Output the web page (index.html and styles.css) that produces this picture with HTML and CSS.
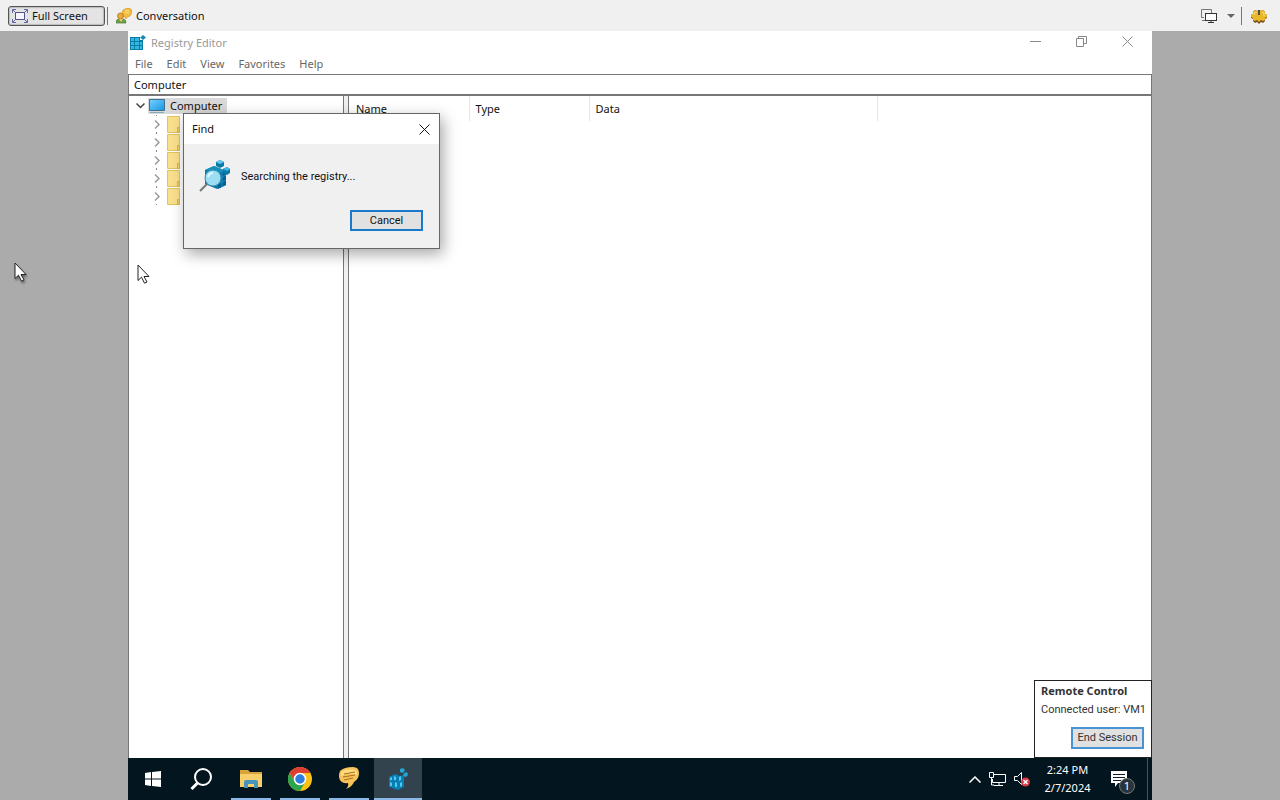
FILE: index.html
```html
<!DOCTYPE html>
<html lang="en">
<head>
    <meta charset="UTF-8">
    <meta name="viewport" content="width=device-width, initial-scale=1.0">
    <title>Remote Session</title>
    <link rel="stylesheet" href="styles.css">
</head>
<body>
    <header class="toolbar">
        <button class="tool tool-active" type="button">
            <svg width="16" height="14" viewBox="0 0 16 14" fill="none" stroke="#6467a8">
                <rect x="3.5" y="3.5" width="9" height="7" fill="#f4f6ff" stroke="#50538f"/>
                <path d="M.5 4V.5H4M12 .5h3.500V4M15.500 10v3.500H12M4 13.500H.5V10M.5.5l3 3M15.500.5l-3 3M.5 13.500l3-3M15.500 13.500l-3-3"/>
            </svg>
            Full Screen
        </button>
        <span class="divider"></span>
        <button class="tool" type="button">
            <svg width="16" height="16" viewBox="0 0 16 16">
                <path d="M7 2q4-3 8-1 2 4-1 7l-3 1-1 2-1-2Q6 9 6 5z" fill="#f3bd40" stroke="#d79a25" stroke-width=".7"/>
                <path d="M9 3q3-1 4 0M9 5q3-1 4 0" stroke="#ffe18b" fill="none"/>
                <path d="M0 15q0-4 3-4h4q3 0 3 4z" fill="#6fa04a" stroke="#4f7b37" stroke-width=".7"/>
                <circle cx="4.500" cy="8" r="3" fill="#e7aa3d" stroke="#a86b16" stroke-width=".7"/>
                <path d="m3 11 2 3 2-3z" fill="#f5c659"/>
            </svg>
            Conversation
        </button>
        <div class="toolbar-right">
            <button class="icon-button monitors" type="button" aria-label="Select monitor">
                <svg width="18" height="16" viewBox="0 0 18 16" fill="none">
                    <path d="M4 9.500H1.500v-8h10V5M2 12.500h3" stroke="#777"/>
                    <rect x="5.500" y="5.500" width="11" height="7" fill="#fff" stroke="#333"/>
                    <path d="M11 13v2M8 14.500h6" stroke="#333"/>
                </svg>
                <svg width="8" height="4" viewBox="0 0 8 4"><path d="M0 0h8L4 4z" fill="#666"/></svg>
            </button>
            <span class="divider"></span>
            <button class="icon-button" type="button" aria-label="Settings">
                <svg width="18" height="16" viewBox="0 0 18 16">
                    <path d="m3 4 2-2 2 1 1-1h2l1 1 2-1 2 2v2l2 1v3l-2 1v2l-2 2-2-1-2 2-2-2-2 1-2-2v-2l-2-1V7l2-1z" fill="#76501c"/>
                    <path d="m3 4 2-2 2 1 1-1h2l1 1 2-1 2 2v2l2 1v2l-2 1v2l-2 1-2-1-2 2-2-2-2 1-2-1v-2l-2-1V7l2-1z" fill="#eab72b"/>
                    <path d="M4 7q0-3 3-3M12 4q3 1 2 4" stroke="#ffe26c" fill="none"/>
                    <path d="M8 2h2v5H8z" fill="#4e5148"/>
                </svg>
            </button>
        </div>
    </header>

    <main class="viewer">
        <div class="desktop">
            <section class="window">
                <div class="titlebar">
                    <svg width="16" height="16" viewBox="0 0 16 16">
                        <path d="M0 2h10v3h3v10H0z" fill="#087ba7"/>
                        <path d="M1 3h3v3H1zM5 3h4v3H5zM1 7h3v3H1zM5 7h4v3H5zM10 7h2v3h-2zM1 11h3v3H1zM5 11h4v3H5zM10 11h2v3h-2z" fill="#35b6df"/>
                        <path d="m13 0 3 2.500L13 5l-3-2.500z" fill="#188bb4"/>
                    </svg>
                    <h1>Registry Editor</h1>
                    <div class="window-buttons">
                        <button type="button" aria-label="Minimize"><svg width="11" height="11" viewBox="0 0 11 11"><path d="M0 5.500h11"/></svg></button>
                        <button type="button" aria-label="Restore"><svg width="11" height="11" viewBox="0 0 11 11"><path d="M.5 2.500h7v8h-7zM2.500 2V.5h8v7H8"/></svg></button>
                        <button type="button" aria-label="Close"><svg width="11" height="11" viewBox="0 0 11 11"><path d="m.5.5 10 10M10.500.5l-10 10"/></svg></button>
                    </div>
                </div>
                <nav class="menubar">
                    <button type="button">File</button>
                    <button type="button">Edit</button>
                    <button type="button">View</button>
                    <button type="button">Favorites</button>
                    <button type="button">Help</button>
                </nav>
                <input class="address" type="text" value="Computer" aria-label="Address">
                <div class="panes">
                    <div class="tree">
                        <div class="tree-root">
                            <svg width="9" height="6" viewBox="0 0 9 6"><path d="m.5.500 4 4 4-4" fill="none" stroke="#444" stroke-width="1.500"/></svg>
                            <span class="tree-label">
                                <svg width="18" height="16" viewBox="0 0 18 16">
                                    <defs><linearGradient id="screen" x2="1" y2="1"><stop stop-color="#76d2ff"/><stop offset="1" stop-color="#1695df"/></linearGradient></defs>
                                    <path d="M1.500 1.500h15v11h-15z" fill="url(#screen)" stroke="#3d718f"/>
                                    <path d="M2 14.500h14" stroke="#8ba9bb"/>
                                </svg>
                                Computer
                            </span>
                        </div>
                        <ul class="tree-keys">
                            <li></li>
                            <li></li>
                            <li></li>
                            <li></li>
                            <li></li>
                        </ul>
                    </div>
                    <div class="splitter"></div>
                    <div class="values">
                        <table>
                            <thead>
                                <tr><th class="col-name">Name</th><th class="col-type">Type</th><th class="col-data">Data</th><th></th></tr>
                            </thead>
                        </table>
                    </div>
                </div>
            </section>

            <section class="dialog" role="dialog" aria-labelledby="find-title">
                <div class="dialog-title">
                    <h2 id="find-title">Find</h2>
                    <button type="button" aria-label="Close"><svg width="11" height="11" viewBox="0 0 11 11"><path d="m.5.5 10 10M10.500.5l-10 10" stroke="#111"/></svg></button>
                </div>
                <div class="dialog-body">
                    <svg width="32" height="32" viewBox="0 0 32 32">
                        <path d="m6 10 9-4 12 5v14l-9 4-12-5z" fill="#087ba9"/>
                        <path d="m6 10 9-4 12 5-9 3z" fill="#168fba"/>
                        <path d="m19 15 8-4v14l-8 4z" fill="#056096"/>
                        <path d="M23 13v14M19 19l8-4M19 24l8-4" stroke="#1f8fc4"/>
                        <path d="m21 0 4 2v4l-4 2-4-2V2z" fill="#087ba9"/><path d="m21 0 4 2-4 2-4-2z" fill="#62cbed"/>
                        <path d="m28 7 3 2v4l-3 2-4-2V9z" fill="#087ba9"/><path d="m28 7 3 2-3 2-4-2z" fill="#43b9e2"/>
                        <path d="M9 23 1 31" stroke="#71777a" stroke-width="2"/>
                        <circle cx="14" cy="18" r="8" fill="#9bddf3" stroke="#368daf"/>
                        <path d="M9 17q1-4 5-4" stroke="#ddf8ff" stroke-width="2" fill="none"/>
                    </svg>
                    <p>Searching the registry...</p>
                </div>
                <div class="dialog-actions"><button class="button" type="button">Cancel</button></div>
            </section>

            <aside class="session">
                <h2>Remote Control</h2>
                <p>Connected user: VM1</p>
                <button class="button" type="button">End Session</button>
            </aside>

            <footer class="taskbar">
                <div class="apps">
                    <button type="button" aria-label="Start">
                        <svg width="16" height="16" viewBox="0 0 16 16" fill="#fff"><path d="m0 2 6-1v6.500H0zM7 1l9-1v7.500H7zM0 8.500h6V15l-6-1zM7 8.500h9V16l-9-1z"/></svg>
                    </button>
                    <button type="button" aria-label="Search">
                        <svg width="24" height="24" viewBox="0 0 24 24" fill="none" stroke="#fff" stroke-width="2"><circle cx="13" cy="10" r="8"/><path d="m7.500 16-6 6" stroke-width="3"/></svg>
                    </button>
                    <button class="running" type="button" aria-label="File Explorer">
                        <svg width="22" height="20" viewBox="0 0 22 20"><path d="M0 1h8l2 2h12v4H0z" fill="#d9a43c"/><path d="M0 5h22v13H0z" fill="#f8cf68"/><path d="M4 19v-6q0-2 2-2h10q2 0 2 2v6h-4v-4H8v4z" fill="#4794bd"/></svg>
                    </button>
                    <button class="running" type="button" aria-label="Chrome">
                        <svg width="24" height="24" viewBox="0 0 24 24">
                            <circle cx="12" cy="12" r="12" fill="#fbc116"/>
                            <path d="M1.600 6A12 12 0 0 1 22.400 6H12a6 6 0 0 0-5.200 9z" fill="#df3f32"/>
                            <path d="M1.600 6A12 12 0 0 0 12 24l5.200-9A6 6 0 0 1 6.800 15z" fill="#2da44e"/>
                            <circle cx="12" cy="12" r="5.500" fill="#2f7de1" stroke="#fff" stroke-width="1.500"/>
                        </svg>
                    </button>
                    <button class="running" type="button" aria-label="Chat">
                        <svg width="22" height="24" viewBox="0 0 22 24"><path d="M2 4Q6 0 15 0q6 0 6 6 0 6-5 9-2 5-8 7 3-3 2-6-8 1-9-6Q1 6 2 4z" fill="#f5c35a"/><path d="M3 5q5-4 14-2 3 2 2 5Q12 5 3 9z" fill="#ffdc82"/><path d="m6 7 11-2M5 10l12-2M6 13l9-2" stroke="#a96d18"/></svg>
                    </button>
                    <button class="running current" type="button" aria-label="Registry Editor">
                        <svg width="22" height="24" viewBox="0 0 22 24">
                            <path d="m2 10 6-3 5 2 4-1v12l-6 3-9-3z" fill="#087eb2"/>
                            <path d="m13 2 3-1 2 2-2 3-3-1zM17 6l3-1 1 3-2 2-3-1z" fill="#24a6d6"/>
                            <path d="m3 11 2-1v3H3zM7 9l2 1v3H7zM3 15l2 1v3H3zM8 15l2 1v4H8zM12 10l2-1v4l-2 1zM13 16l2-1v4l-2 1z" fill="#55c8ef"/>
                        </svg>
                    </button>
                </div>
                <div class="tray">
                    <svg width="12" height="7" viewBox="0 0 12 7" fill="none" stroke="#fff" stroke-width="1.500"><path d="m.5 6.500 5.500-5.500 5.500 5.500"/></svg>
                    <svg width="17" height="14" viewBox="0 0 17 14" fill="none" stroke="#fff"><path d="M5 2.500h11.500v8H3.500V7M10 11v2M5 13.500h9M.5.5h4v5h-4zM2.500 6v7H5"/></svg>
                    <svg width="16" height="16" viewBox="0 0 16 16"><path d="M.5 5.500h3l4-4v12l-4-4h-3z" fill="none" stroke="#fff"/><circle cx="11.500" cy="11" r="4.500" fill="#d73945"/><path d="m9.500 9 4 4M13.500 9l-4 4" stroke="#fff" stroke-width="1.500"/></svg>
                    <time class="clock" datetime="2024-02-07T14:24">2:24 PM<br>2/7/2024</time>
                    <button class="notifications" type="button" aria-label="1 notification">
                        <svg width="16" height="16" viewBox="0 0 16 16"><path d="M0 0h16v12H7l-3 4v-4H0z" fill="#fff"/><path d="M2 3.500h12M2 6.500h12M2 9.500h8" stroke="#111d24"/></svg>
                        <span class="badge">1</span>
                    </button>
                </div>
            </footer>

            <svg class="pointer pointer-remote" width="13" height="20" viewBox="0 0 13 20"><path d="M1 1v15.500l3.500-3.300 3 6 2.500-1.200-3-5.500h5z" fill="#fff" stroke="#222"/></svg>
        </div>
        <svg class="pointer pointer-local" width="13" height="20" viewBox="0 0 13 20"><path d="M1 1v15.500l3.500-3.300 3 6 2.500-1.200-3-5.500h5z" fill="#fff" stroke="#222"/></svg>
    </main>

    <script>
        // every registry key starts collapsed
        document.querySelectorAll('.tree-keys li').forEach(function (item) {
            item.innerHTML =
                '<svg width="6" height="18" viewBox="0 0 6 18"><path d="m1 5.500 4 4-4 4" fill="none" stroke="#999" stroke-width="1.500"/><path d="M2 0h1v1H2zM2 17h1v1H2z" fill="#888"/></svg>' +
                '<svg width="13" height="17" viewBox="0 0 13 17"><path d="M.5.5h12v16H.5z" fill="#f9e08c" stroke="#e2c35e"/><path d="M10.500 11.500h2v5h-2z" fill="#efcf68" stroke="#d7b64d"/></svg>';
        });
    </script>
</body>
</html>
```

FILE: styles.css
```css
* {
    box-sizing: border-box;
}
body {
    margin: 0;
    min-height: 100vh;
    display: flex;
    flex-direction: column;
    font-family: "Noto Sans", "Open Sans", sans-serif;
    font-size: 11px;
    line-height: 16px;
    color: #111;
    background-color: #ababab;
}
button {
    font: inherit;
    color: inherit;
    border: 0;
    padding: 0;
    background: none;
}
h1, h2, p, ul {
    margin: 0;
    padding: 0;
    font-size: inherit;
    font-weight: normal;
}
svg {
    display: block;
    flex-shrink: 0;
}

/* toolbar */
.toolbar {
    display: flex;
    align-items: center;
    height: 31px;
    padding: 0 12px 0 8px;
    background-color: #f0f0f0;
}
.tool {
    display: flex;
    align-items: center;
    gap: 4px;
    height: 20px;
}
.tool-active {
    width: 97px;
    padding-left: 3px;
    border: 1px solid #555;
    border-radius: 3px;
    background-color: #e4e4e4;
    box-shadow: inset 0 0 1px 1px #bbb;
}
.divider {
    width: 1px;
    height: 18px;
    margin: 0 8px 0 2px;
    background-color: #777;
}
.toolbar-right {
    display: flex;
    align-items: center;
    margin-left: auto;
}
.monitors {
    display: flex;
    align-items: center;
    gap: 9px;
    margin-right: 4px;
}

/* remote desktop */
.viewer {
    position: relative;
    flex: 1;
    display: flex;
    padding: 0 10%;
}
.desktop {
    position: relative;
    flex: 1;
    display: flex;
    flex-direction: column;
}
.window {
    flex: 1;
    display: flex;
    flex-direction: column;
    background-color: #fff;
}
.titlebar {
    display: flex;
    align-items: center;
    gap: 5px;
    height: 23px;
    padding-left: 2px;
    color: #999;
}
.window-buttons {
    display: flex;
    align-self: flex-start;
    margin-left: auto;
    margin-right: 2px;
}
.window-buttons button {
    width: 46px;
    height: 21px;
    display: flex;
    align-items: center;
    justify-content: center;
}
.window-buttons path {
    fill: none;
    stroke: #888;
}
.menubar {
    display: flex;
    gap: 14px;
    height: 20px;
    padding-left: 7px;
    color: #666;
}
.address {
    width: 100%;
    height: 22px;
    padding: 0 5px;
    border: 1px solid #777;
    border-bottom-width: 2px;
    font: inherit;
    color: inherit;
}
.panes {
    flex: 1;
    display: flex;
    border-left: 1px solid #777;
    border-right: 1px solid #777;
}
.tree {
    width: 214px;
    padding-top: 1px;
}
.tree-root {
    display: flex;
    align-items: center;
    gap: 3px;
    height: 18px;
    padding-left: 7px;
}
.tree-label {
    display: flex;
    align-items: center;
    gap: 4px;
    height: 16px;
    padding-right: 5px;
    background-color: #d9d9d9;
}
.tree-keys {
    list-style: none;
    padding-left: 25px;
}
.tree-keys li {
    display: flex;
    align-items: center;
    gap: 7px;
    height: 18px;
}
.splitter {
    width: 6px;
    border: 1px solid #777;
    border-top: 0;
    border-bottom: 0;
    background-color: #f0f0f0;
}
.values {
    flex: 1;
}
.values table {
    width: 100%;
    table-layout: fixed;
    border-collapse: collapse;
}
.values th {
    height: 25px;
    padding: 0 7px;
    text-align: left;
    font-weight: normal;
}
.values th + th {
    border-left: 1px solid #e5e5e5;
    padding-left: 6px;
}
.col-name {
    width: 120px;
}
.col-type {
    width: 120px;
}
.col-data {
    width: 288px;
}

/* find dialog */
.dialog {
    position: absolute;
    top: 82px;
    left: 55px;
    width: 257px;
    border: 1px solid #666;
    background-color: #f0f0f0;
    box-shadow: 3px 5px 14px rgba(0,0,0,0.35);
}
.dialog-title {
    display: flex;
    align-items: center;
    justify-content: space-between;
    height: 30px;
    padding: 0 9px 0 8px;
    background-color: #fff;
}
.dialog-body {
    display: flex;
    align-items: center;
    gap: 10px;
    padding: 16px 15px;
    font-family: Roboto, sans-serif;
}
.dialog-body p {
    padding-top: 2px;
}
.dialog-actions {
    display: flex;
    justify-content: flex-end;
    padding: 2px 16px 17px;
    font-family: Roboto, sans-serif;
}
.button {
    width: 73px;
    height: 21px;
    border: 2px solid #1979ca;
    background-color: #e1e1e1;
}

/* session box */
.session {
    position: absolute;
    right: 0;
    bottom: 42px;
    width: 118px;
    display: flex;
    flex-direction: column;
    padding: 2px 7px 8px 6px;
    border: 1px solid #222;
    background-color: #fff;
    color: #333;
    white-space: nowrap;
}
.session h2 {
    font-weight: bold;
}
.session p {
    margin: 3px 0 9px;
    font-family: Roboto, sans-serif;
}
.session .button {
    align-self: flex-end;
    height: 22px;
    border-color: #4793d3;
    font-family: Roboto, sans-serif;
}

/* taskbar */
.taskbar {
    display: flex;
    justify-content: space-between;
    height: 42px;
    background-color: #03151e;
    color: #fff;
}
.apps {
    display: flex;
    gap: 1px;
    padding-left: 1px;
}
.apps button {
    width: 48px;
    height: 42px;
    display: flex;
    align-items: center;
    justify-content: center;
}
.apps .running {
    background: linear-gradient(#8cb8e8, #8cb8e8) center bottom / 40px 2px no-repeat;
}
.apps .current {
    background-color: #32434e;
    background-size: 48px 2px;
}
.tray {
    display: flex;
    align-items: center;
    gap: 8px;
}
.clock {
    width: 59px;
    text-align: center;
    line-height: 18px;
}
.notifications {
    position: relative;
    width: 43px;
    height: 42px;
    padding-left: 6px;
    border-right: 1px solid #47545c;
    margin-right: 4px;
}
.badge {
    position: absolute;
    left: 14px;
    top: 20px;
    width: 16px;
    height: 16px;
    border: 1px solid #777;
    border-radius: 50%;
    line-height: 14px;
    background-color: #28343b;
}

/* mouse pointers */
.pointer {
    position: absolute;
}
.pointer-remote {
    left: 9px;
    top: 233px;
}
.pointer-local {
    left: 14px;
    top: 231px;
    filter: drop-shadow(1px 2px 1px rgba(0,0,0,0.4));
}
```
